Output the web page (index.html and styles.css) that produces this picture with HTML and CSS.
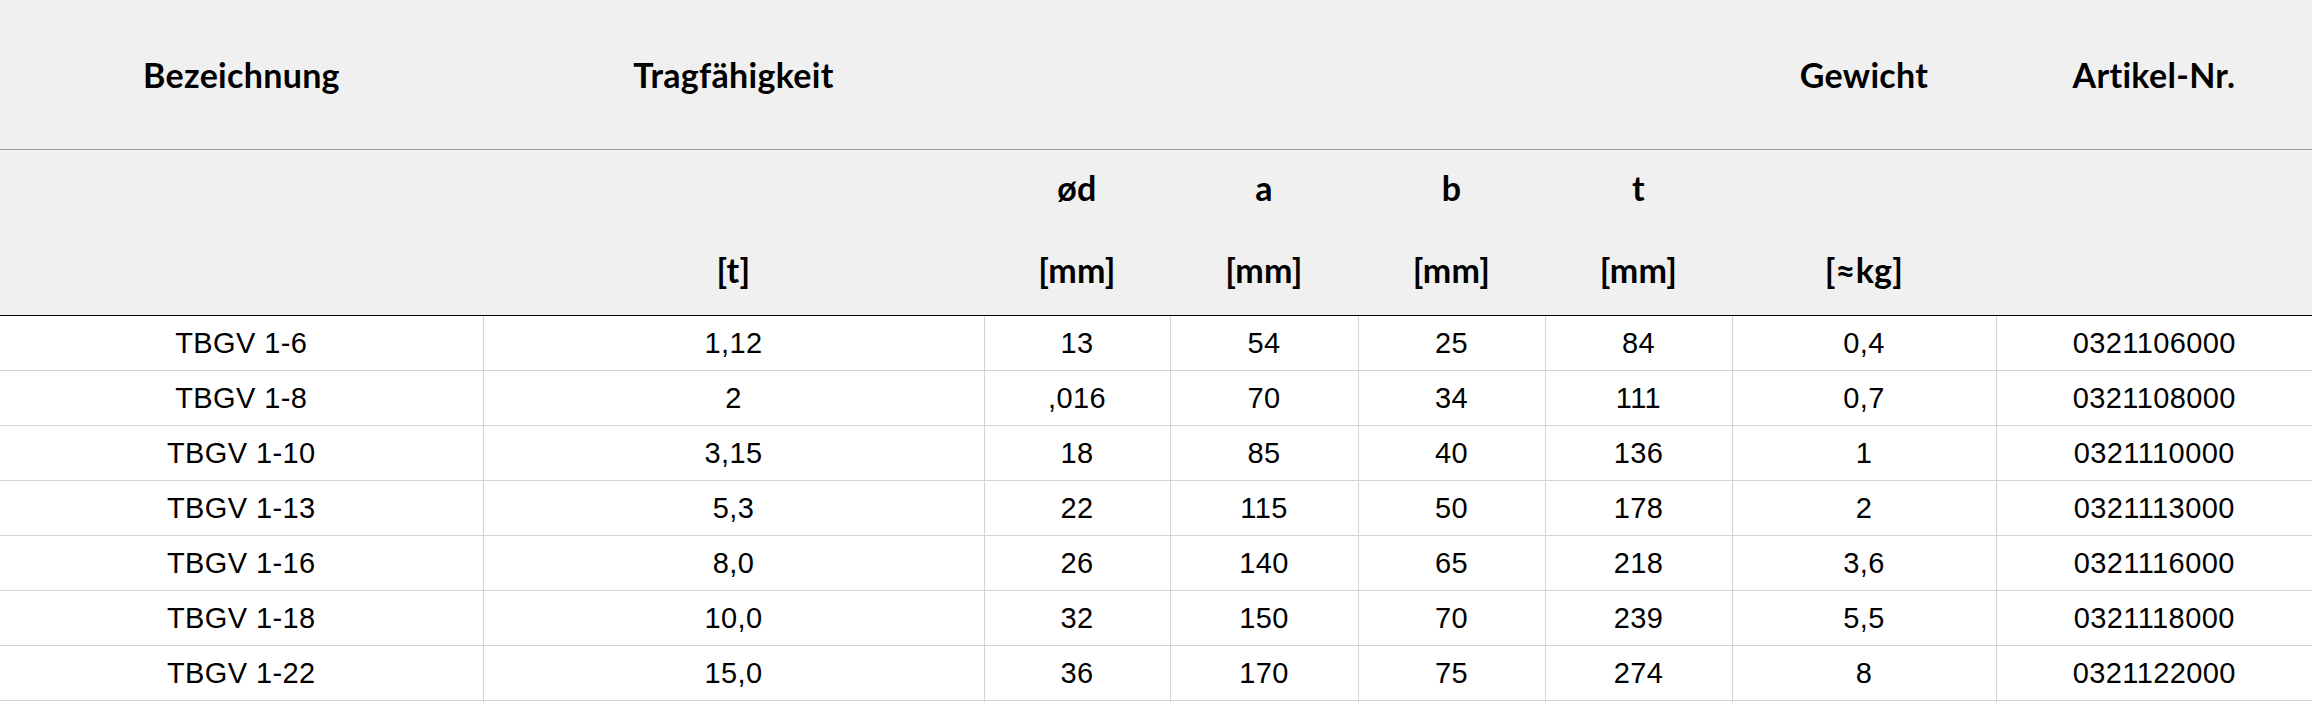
FILE: index.html
```html
<!DOCTYPE html>
<html lang="de">
<head>
<meta charset="utf-8">
<title>TBGV</title>
<link rel="stylesheet" href="styles.css">
</head>
<body>
<table class="spec">
  <colgroup>
    <col class="c1"><col class="c2"><col class="c3"><col class="c4"><col class="c5"><col class="c6"><col class="c7"><col class="c8">
  </colgroup>
  <thead>
    <tr class="h1">
      <th>Bezeichnung</th>
      <th>Tragfähigkeit</th>
      <th></th><th></th><th></th><th></th>
      <th>Gewicht</th>
      <th>Artikel-Nr.</th>
    </tr>
    <tr class="h2">
      <th><span class="l1"></span><span class="l2"></span></th>
      <th><span class="l1"></span><span class="l2">[t]</span></th>
      <th><span class="l1">ød</span><span class="l2">[mm]</span></th>
      <th><span class="l1">a</span><span class="l2">[mm]</span></th>
      <th><span class="l1">b</span><span class="l2">[mm]</span></th>
      <th><span class="l1">t</span><span class="l2">[mm]</span></th>
      <th><span class="l1"></span><span class="l2">[≈kg]</span></th>
      <th><span class="l1"></span><span class="l2"></span></th>
    </tr>
  </thead>
  <tbody>
    <tr><td>TBGV 1-6</td><td>1,12</td><td>13</td><td>54</td><td>25</td><td>84</td><td>0,4</td><td>0321106000</td></tr>
    <tr><td>TBGV 1-8</td><td>2</td><td>,016</td><td>70</td><td>34</td><td>111</td><td>0,7</td><td>0321108000</td></tr>
    <tr><td>TBGV 1-10</td><td>3,15</td><td>18</td><td>85</td><td>40</td><td>136</td><td>1</td><td>0321110000</td></tr>
    <tr><td>TBGV 1-13</td><td>5,3</td><td>22</td><td>115</td><td>50</td><td>178</td><td>2</td><td>0321113000</td></tr>
    <tr><td>TBGV 1-16</td><td>8,0</td><td>26</td><td>140</td><td>65</td><td>218</td><td>3,6</td><td>0321116000</td></tr>
    <tr><td>TBGV 1-18</td><td>10,0</td><td>32</td><td>150</td><td>70</td><td>239</td><td>5,5</td><td>0321118000</td></tr>
    <tr><td>TBGV 1-22</td><td>15,0</td><td>36</td><td>170</td><td>75</td><td>274</td><td>8</td><td>0321122000</td></tr>
    <tr><td></td><td></td><td></td><td></td><td></td><td></td><td></td><td></td></tr>
  </tbody>
</table>
</body>
</html>
```
FILE: styles.css
```css
html, body {
  margin: 0;
  padding: 0;
  background: #ffffff;
}

.spec {
  width: 2312px;
  table-layout: fixed;
  border-collapse: collapse;
  border-spacing: 0;
}

.c1 { width: 483px; }
.c2 { width: 501px; }
.c3 { width: 186px; }
.c4 { width: 188px; }
.c5 { width: 187px; }
.c6 { width: 187px; }
.c7 { width: 264px; }
.c8 { width: 316px; }

.spec th {
  background: #f0f0f0;
  font-family: Lato, "Open Sans", sans-serif;
  font-weight: 700;
  font-size: 34px;
  letter-spacing: 0.3px;
  color: #000;
  text-align: center;
  padding: 0;
}

.h1 th {
  height: 149px;
  vertical-align: middle;
  border-bottom: 1px solid #a0a0a0;
}

.h2 th {
  height: 165px;
  vertical-align: top;
  border-bottom: 1px solid #000;
}

.l1, .l2 {
  display: block;
  height: 40px;
  line-height: 40px;
}

.l1 { margin-top: 18px; }
.l2 { margin-top: 42px; }

.spec td {
  font-family: "Liberation Sans", Arial, sans-serif;
  font-size: 29px;
  letter-spacing: 0.4px;
  color: #000;
  text-align: center;
  vertical-align: middle;
  height: 54px;
  padding: 0;
  border-bottom: 1px solid #d4d4d4;
  border-left: 1px solid #d4d4d4;
}

.spec td:first-child {
  border-left: none;
}
```
